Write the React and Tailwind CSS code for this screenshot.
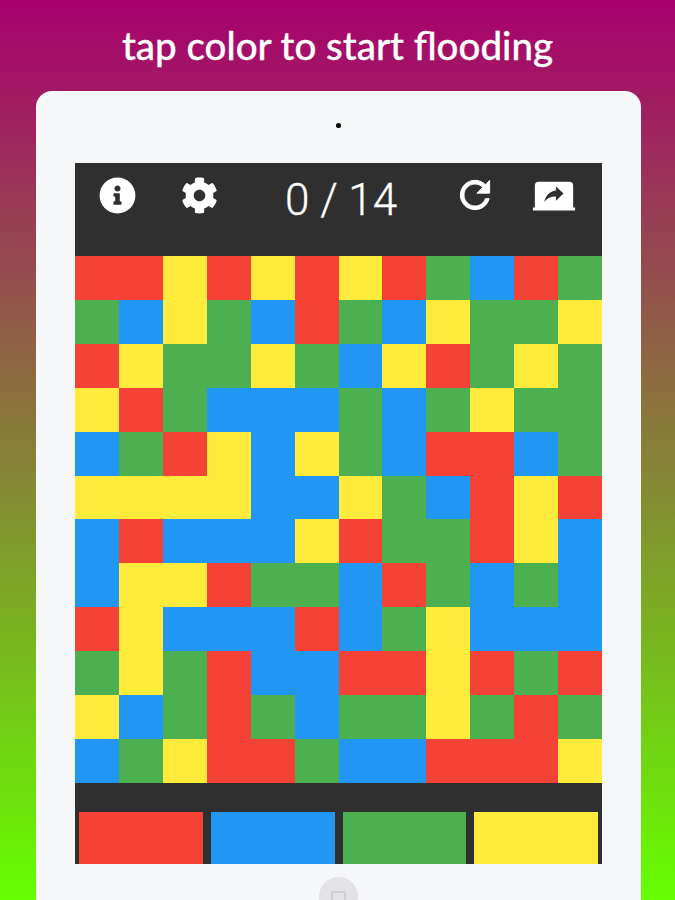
import React from 'react';
import { FaInfoCircle, FaCog } from 'react-icons/fa';

const rows = [
  'RRYRYRYRGBRG',
  'GBYGBRGBYGGY',
  'RYGGYGBYRGYG',
  'YRGBBBGBGYGG',
  'BGRYBYGBRRBG',
  'YYYYBBYGBRYR',
  'BRBBBYRGGRYB',
  'BYYRGGBRGBGB',
  'RYBBBRBGYBBB',
  'GYGRBBRRYRGR',
  'YBGRGBGGYGRG',
  'BGYRRGBBRRRY',
];

const cellClass = {
  R: 'bg-[#f44336]',
  B: 'bg-[#2196f3]',
  G: 'bg-[#4caf50]',
  Y: 'bg-[#ffeb3b]',
};

const RefreshIcon = () => (
  <svg viewBox="0 0 24 24" className="mt-[10px] ml-[36px] h-[44px] w-[44px] fill-white stroke-white stroke-[0.5px]">
    <path d="M17.65 6.35C16.2 4.9 14.21 4 12 4c-4.42 0-7.99 3.58-7.99 8s3.57 8 7.99 8c3.73 0 6.84-2.55 7.73-6h-2.08c-.82 2.33-3.04 4-5.65 4-3.31 0-6-2.69-6-6s2.69-6 6-6c1.66 0 3.14.69 4.22 1.78L13 11h7V4l-2.35 2.35z" />
  </svg>
);

// laptop with share arrow, screen sits straight on the base
const ShareIcon = () => (
  <svg viewBox="0 0 24 24" className="mt-[10px] ml-[34px] h-[46px] w-[46px] fill-white">
    <path
      fillRule="evenodd"
      d="M4 4.5h16a2 2 0 0 1 2 2V18H2V6.5a2 2 0 0 1 2-2z M1 18h22v1.6H1z M13 14.47v-2.19c-2.78 0-4.61.85-6 2.72.56-2.67 2.11-5.33 6-5.87V7l4 3.73-4 3.74z"
    />
  </svg>
);

const App = () => {
  return (
    <div className="h-[900px] w-[675px] overflow-hidden bg-linear-to-b/srgb from-[#a8006f] to-[#66ff00] font-['Lato',sans-serif]">
      <h1 className="flex h-[91px] items-start justify-center pt-[21px] text-[38.5px] leading-[48px] font-medium text-white [-webkit-text-stroke:0.3px_white]">
        tap color to start flooding
      </h1>

      <div className="ml-[36px] h-[809px] w-[605px] rounded-t-[16px] bg-[#f6f7f9] px-[39px]">
        <div className="flex h-[72px] items-start justify-center pt-[32px]">
          <span className="h-[5px] w-[5px] rounded-full bg-black"></span>
        </div>

        <div className="flex h-[93px] items-start bg-[#2f2f2f] text-white">
          <FaInfoCircle className="mt-[14px] ml-[24px] text-[37px]" />
          <FaCog className="mt-[14px] ml-[45px] text-[37px]" />
          <span className="mt-[11px] ml-[67px] w-[132px] font-['Roboto',sans-serif] text-[44px] leading-[52px] font-light [-webkit-text-stroke:0.3px_white]">0 / 14</span>
          <RefreshIcon />
          <ShareIcon />
        </div>

        <div className="grid grid-cols-12">
          {rows.map((row, r) =>
            row.split('').map((c, i) => (
              <div key={r + '-' + i} className={'h-[43.92px] ' + cellClass[c]}></div>
            ))
          )}
        </div>

        <div className="h-[81px] bg-[#2f2f2f] pt-[29px]">
          <div className="grid h-[52px] grid-cols-4 gap-[8px] px-[4px]">
            <div className="bg-[#f44336]"></div>
            <div className="bg-[#2196f3]"></div>
            <div className="bg-[#4caf50]"></div>
            <div className="bg-[#ffeb3b]"></div>
          </div>
        </div>

        <div className="flex justify-center pt-[13px]">
          <div className="flex h-[40px] w-[39px] justify-center rounded-full bg-[#e3e3e5] pt-[14px]">
            <div className="h-[14px] w-[15px] rounded-[2px] border-2 border-[#d0d0d2]"></div>
          </div>
        </div>
      </div>
    </div>
  );
};

export default App;
